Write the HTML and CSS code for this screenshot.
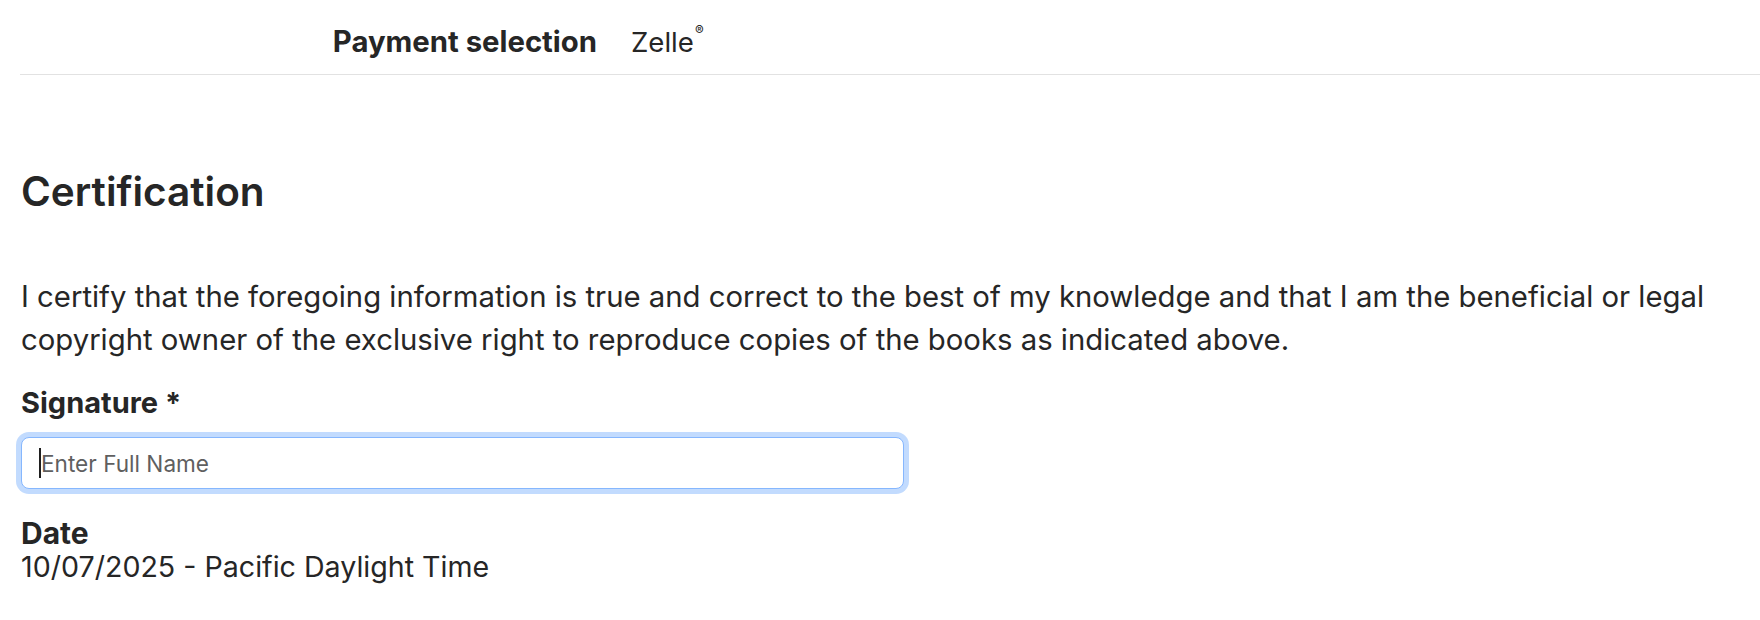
FILE: index.html
```html
<!DOCTYPE html>
<html lang="en">
<head>
<meta charset="utf-8">
<title>Certification</title>
<link rel="stylesheet" href="styles.css">
</head>
<body>
<div class="page">
  <div class="summary-row">
    <div class="summary-label">Payment selection</div>
    <div class="summary-value">Zelle<span class="reg">®</span></div>
  </div>

  <section class="cert">
    <h2 class="cert-title">Certification</h2>
    <p class="cert-text">I certify that the foregoing information is true and correct to the best of my knowledge and that I am the beneficial or legal copyright owner of the exclusive right to reproduce copies of the books as indicated above.</p>

    <div class="field">
      <label class="field-label" for="sig">Signature *</label>
      <div class="input-wrap">
        <input id="sig" class="text-input is-focused" type="text" placeholder="Enter Full Name">
      </div>
    </div>

    <div class="field-date">
      <div class="date-label">Date</div>
      <div class="date-value">10/07/2025 - Pacific Daylight Time</div>
    </div>
  </section>
</div>
</body>
</html>
```
FILE: styles.css
```css
* { box-sizing: border-box; }

html, body {
  margin: 0;
  padding: 0;
  background: #ffffff;
}

body {
  font-family: "Inter", "Noto Sans", sans-serif;
  color: #262626;
}

.page {
  padding-left: 20px;
}

/* summary row */
.summary-row {
  display: grid;
  grid-template-columns: 577px auto;
  column-gap: 34px;
  align-items: center;
  padding-top: 20px;
  padding-bottom: 10px;
  border-bottom: 1px solid #e2e2e2;
}

.summary-label {
  text-align: right;
  font-weight: 700;
  font-size: 29.3px;
  line-height: 44px;
}

.summary-value {
  font-size: 27.6px;
  line-height: 44px;
}

.reg {
  font-size: 13px;
  line-height: 0;
  vertical-align: 17px;
  margin-left: 1px;
}

/* certification */
.cert {
  padding-left: 1px;
  padding-right: 20px;
}

.cert-title {
  margin: 93px 0 0;
  font-size: 40.5px;
  font-weight: 600;
  line-height: 48px;
}

.cert-text {
  margin: 59px 0 0;
  font-size: 29.3px;
  line-height: 43px;
}

.field {
  margin-top: 20px;
}

.field-label {
  display: block;
  font-size: 29px;
  font-weight: 700;
  line-height: 43px;
}

.input-wrap {
  position: relative;
  width: 883px;
  margin-top: 13px;
}

.input-wrap::after {
  content: "";
  position: absolute;
  left: 18px;
  top: 11px;
  width: 1.5px;
  height: 30px;
  background: #1f1f1f;
}

.text-input {
  display: block;
  width: 100%;
  height: 52px;
  padding: 0 16px 0 19px;
  font-family: "Inter", "Noto Sans", sans-serif;
  font-size: 22.6px;
  color: #262626;
  background: #ffffff;
  border: 1.5px solid #dee2e6;
  border-radius: 8px;
  outline: none;
}

.text-input.is-focused,
.text-input:focus {
  border-color: #86b7fe;
  box-shadow: 0 0 0 5px rgba(13, 110, 253, 0.25);
}

.text-input::placeholder {
  color: #5f5f5f;
  opacity: 1;
}

.field-date {
  margin-top: 27px;
}

.date-label {
  font-size: 30px;
  font-weight: 700;
  line-height: 34px;
}

.date-value {
  font-size: 28.6px;
  line-height: 34px;
}
```
